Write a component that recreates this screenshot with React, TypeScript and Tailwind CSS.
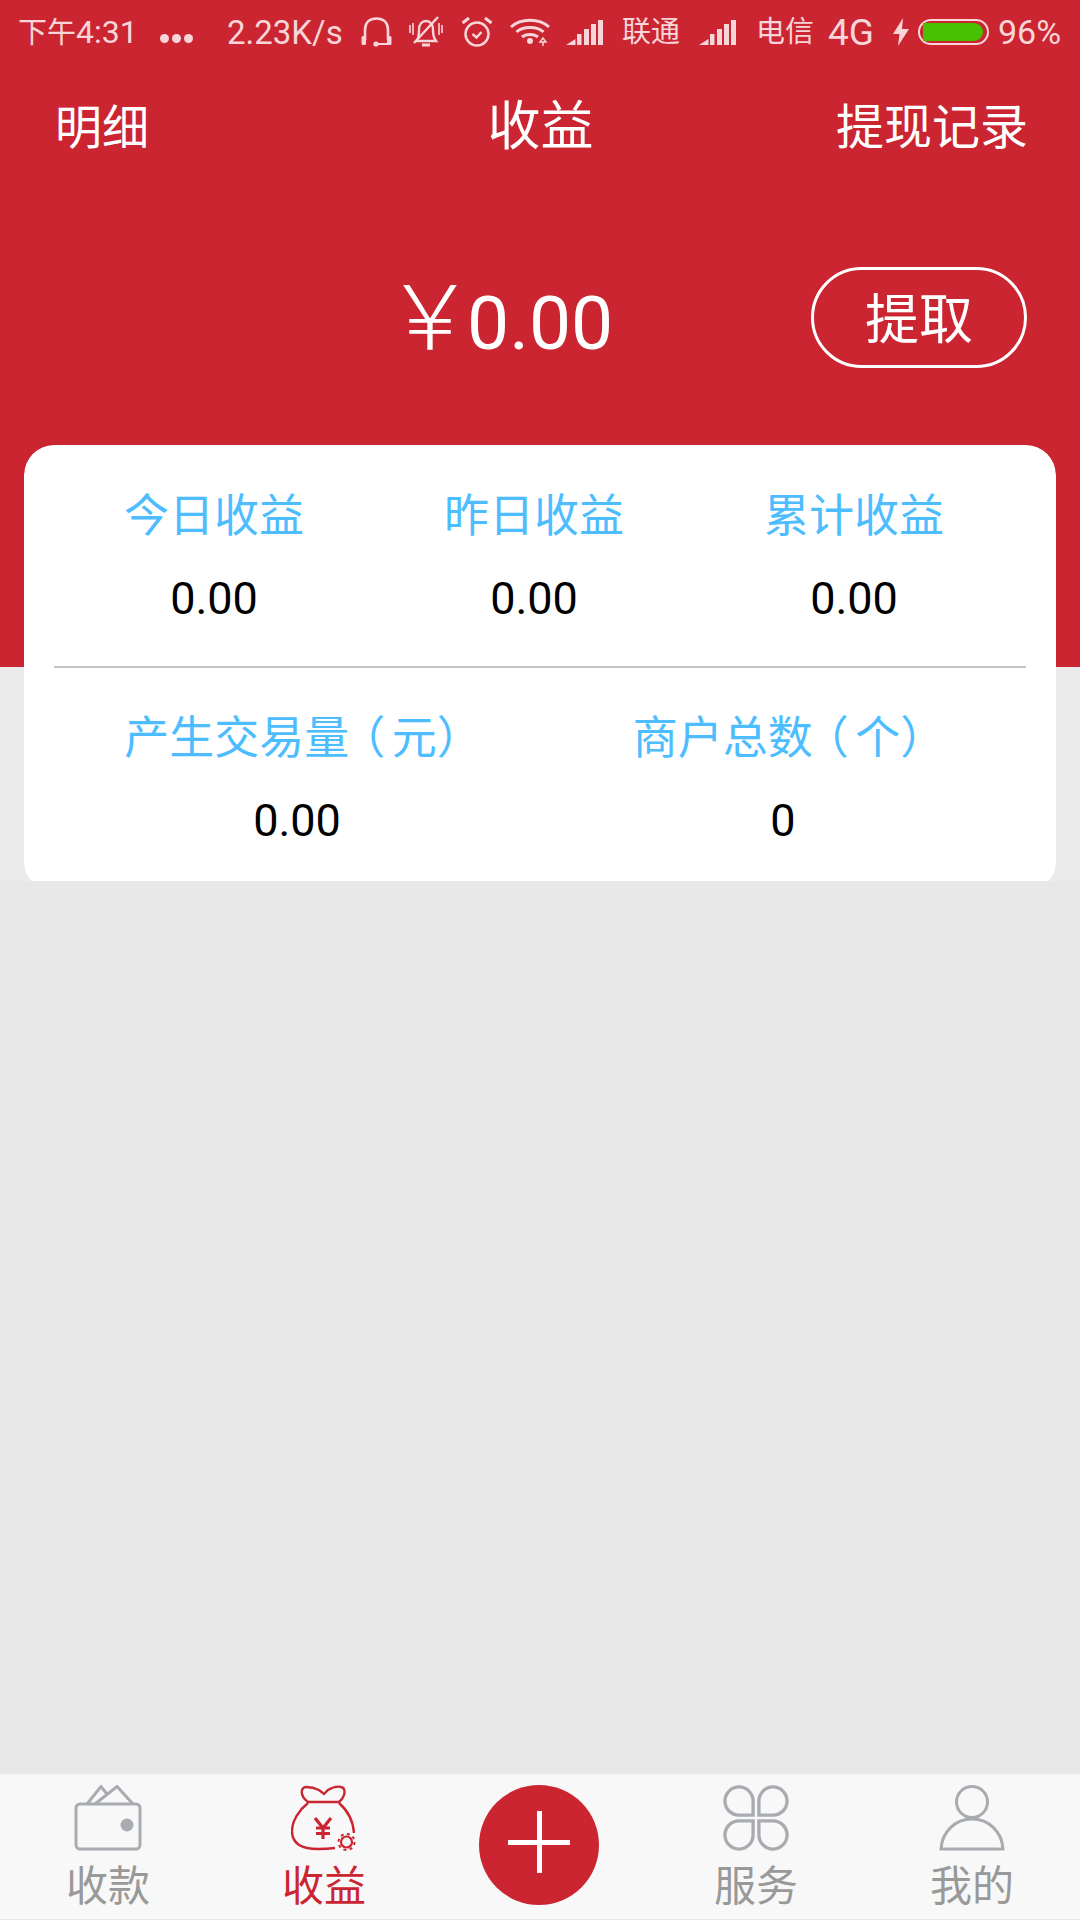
import React from 'react';

const FONT = "font-['Roboto','Noto_Sans_CJK_SC',sans-serif]";

const SignalIcon = () => (
  <svg width="37" height="25" viewBox="0 0 37 25" fill="currentColor">
    <path d="M0 25 L9.5 19 V25 Z" />
    <rect x="11" y="14" width="4.5" height="11" />
    <rect x="18" y="9" width="5" height="16" />
    <rect x="25" y="4" width="5" height="21" />
    <rect x="32" y="0" width="5" height="25" />
  </svg>
);

const HeadsetIcon = () => (
  <svg width="31" height="30" viewBox="0 0 31 30" fill="none" stroke="currentColor" strokeWidth="2.6">
    <path d="M4 23 V13 C4 5 9 1.5 15.5 1.5 C22 1.5 27 5 27 13 V23" />
    <rect x="0.5" y="19" width="4.5" height="9" rx="1.5" fill="currentColor" stroke="none" />
    <rect x="26" y="19" width="4.5" height="9" rx="1.5" fill="currentColor" stroke="none" />
    <circle cx="15" cy="27" r="2.6" fill="currentColor" stroke="none" />
    <path d="M16 27 H27" strokeWidth="2" />
  </svg>
);

const BellOffIcon = () => (
  <svg width="34" height="32" viewBox="0 0 34 32" fill="none" stroke="currentColor" strokeWidth="2.4">
    <path d="M8 25 C10 21 10 18 10 14 C10 8 13 5 17 5 C21 5 24 8 24 14 C24 18 24 21 27 25 Z" />
    <path d="M29 1 L5 27" />
    <path d="M1 9 V17 M33 9 V17 M4 7 V19 M30 7 V19" strokeWidth="1.6" />
    <path d="M13 29 H21" strokeWidth="3" />
  </svg>
);

const AlarmIcon = () => (
  <svg width="32" height="32" viewBox="0 0 32 32" fill="none" stroke="currentColor" strokeWidth="2.5">
    <circle cx="16" cy="18" r="11.5" />
    <path d="M11.5 18 L15.5 21.5 L20.5 16" />
    <path d="M1.5 7 L8 2 M30.5 7 L24 2" strokeWidth="3" />
  </svg>
);

const WifiIcon = () => (
  <svg width="40" height="28" viewBox="0 0 40 28" fill="none" stroke="currentColor" strokeWidth="3">
    <path d="M1 9 C11 0 29 0 39 9" />
    <path d="M6.5 14 C13 8 27 8 33.5 14" />
    <path d="M12 19 C16 15.5 24 15.5 28 19" />
    <circle cx="20" cy="23" r="3" fill="currentColor" stroke="none" />
    <path d="M33 20 L30 24 H36 Z M33 28 V24" strokeWidth="1.5" />
  </svg>
);

const BoltIcon = () => (
  <svg width="16" height="28" viewBox="0 0 16 28" fill="currentColor">
    <path d="M10 0 L0 16 H6.5 L5 28 L16 11 H9 Z" />
  </svg>
);

const WalletIcon = () => (
  <svg width="68" height="66" viewBox="0 0 68 66" fill="none" stroke="#a8abb0" strokeWidth="3">
    <path d="M13 19 L27 1.5 L33 9 M21 19 L43 1.5 L59 19" />
    <rect x="2" y="19" width="64" height="45" rx="4" />
    <circle cx="53" cy="40" r="6.5" fill="#a8abb0" stroke="none" />
  </svg>
);

const MoneyBagIcon = () => (
  <svg width="66" height="66" viewBox="0 0 66 66" fill="none" stroke="#ca2531" strokeWidth="2.4">
    <path d="M17 17 C8 10 10 2 15 2 C21 2 24 3 28 5 L33 9 L37 5 C42 2 46 1 50 2 C55 3 55 11 48 17 Z" />
    <path d="M17 18 C8 25 1 36 1 46 C1 58 9 64 27 64 C34 64 40 63.5 44 63" />
    <path d="M48 18 C56 25 62 34 63 48" />
    <path d="M24 33 L32 43 L40 33 M32 43 V54 M25 43 H39 M25 48.5 H39" strokeWidth="3.2" />
    <circle cx="55.5" cy="57" r="5.5" strokeWidth="2.2" />
    <circle cx="55.5" cy="57" r="8" strokeWidth="2" strokeDasharray="3 3.3" />
  </svg>
);

const CloverIcon = () => (
  <svg width="66" height="66" viewBox="0 0 68 68" fill="none" stroke="#a8abb0" strokeWidth="3.4">
    <path d="M31 31 H16.5 A14.5 14.5 0 1 1 31 16.5 Z" />
    <path d="M37 31 V16.5 A14.5 14.5 0 1 1 51.5 31 Z" />
    <path d="M31 37 V51.5 A14.5 14.5 0 1 1 16.5 37 Z" />
    <path d="M37 37 H51.5 A14.5 14.5 0 1 1 37 51.5 Z" />
  </svg>
);

const UserIcon = () => (
  <svg width="66" height="66" viewBox="0 0 66 66" fill="none" stroke="#a8abb0" strokeWidth="3">
    <circle cx="33" cy="17" r="15.5" />
    <path d="M2 64 C3 47 16 34 33 34 C50 34 63 47 64 64 Z" />
  </svg>
);

function Stat({ label, value }: { label: React.ReactNode; value: string }) {
  return (
    <div className="flex flex-col items-center">
      <span className="h-[62px] text-[45px] leading-[62px] text-[#4dbdff]">{label}</span>
      <span className="mt-[25px] h-[52px] text-[45px] leading-[52px] text-black">{value}</span>
    </div>
  );
}

function NavItem({ icon, label, active }: { icon: React.ReactNode; label: string; active?: boolean }) {
  return (
    <div className="flex flex-col items-center">
      <div className="flex h-[66px] items-center justify-center">{icon}</div>
      <span className={`mt-[11px] text-[42px] leading-[50px] ${active ? 'text-[#ca2531]' : 'text-[#999999]'}`}>{label}</span>
    </div>
  );
}

export default function App() {
  return (
    <div className={`flex h-[1920px] w-[1080px] flex-col overflow-hidden bg-[#e8e8e8] ${FONT}`}>
      {/* Red header */}
      <header className="h-[667px] shrink-0 bg-[#ca2531] text-white">
        <div className="flex h-[64px] items-center whitespace-nowrap pl-[18px] text-[33px] leading-none text-[#f7d5d9]">
          <span className="w-[121px] shrink-0 text-[32px]"><span className="text-[29px]">下午</span>4:31</span>
          <span className="ml-[21px] mt-[12px] flex w-[33px] shrink-0 gap-[3px]">
            <i className="h-[9px] w-[9px] rounded-full bg-[#f7d5d9]" />
            <i className="h-[9px] w-[9px] rounded-full bg-[#f7d5d9]" />
            <i className="h-[9px] w-[9px] rounded-full bg-[#f7d5d9]" />
          </span>
          <span className="ml-[34px] w-[115px] shrink-0">2.23K/s</span>
          <span className="ml-[19px] shrink-0"><HeadsetIcon /></span>
          <span className="ml-[17px] shrink-0"><BellOffIcon /></span>
          <span className="ml-[18px] shrink-0"><AlarmIcon /></span>
          <span className="ml-[17px] shrink-0"><WifiIcon /></span>
          <span className="ml-[16px] shrink-0"><SignalIcon /></span>
          <span className="ml-[19px] w-[58px] shrink-0 text-[29px]">联通</span>
          <span className="ml-[19px] shrink-0"><SignalIcon /></span>
          <span className="ml-[20px] w-[58px] shrink-0 text-[29px]">电信</span>
          <span className="ml-[14px] w-[46px] shrink-0 text-[37px]">4G</span>
          <span className="ml-[19px] shrink-0"><BoltIcon /></span>
          <span className="ml-[9px] flex h-[26px] w-[71px] shrink-0 items-center rounded-full border-2 border-[#f7d5d9] pl-[3px] pr-[4px]">
            <span className="h-[18px] w-full rounded-r-full rounded-l-[3px] bg-[#46c000]" />
          </span>
          <span className="ml-[9px] shrink-0 text-[34px]">96%</span>
        </div>

        <div className="flex h-[128px] items-center justify-between pl-[55px] pr-[52px] text-[47px]">
          <span className="w-[200px]">明细</span>
          <span className="mr-[2px] text-[53px]">收益</span>
          <span className="w-[200px] text-right text-[48px]">提现记录</span>
        </div>

        <div className="mt-[75px] flex h-[101px] items-center pl-[385px] pr-[53px]">
          <span className="flex items-baseline pt-[3px] text-[75px] leading-none">
            <span className="text-[90px] font-light tracking-[-8px]">￥</span>0.00
          </span>
          <button className="ml-auto flex h-[101px] w-[216px] items-center justify-center rounded-full border-[3px] border-white pt-[6px] text-[54px] leading-none">
            提取
          </button>
        </div>
      </header>

      {/* Stats card, clipped at its lower edge */}
      <div className="bg-[#ebebeb]">
        <div className="mx-[24px] -mt-[222px] h-[436px] overflow-hidden rounded-t-[30px]">
          <div className="h-[446px] rounded-[30px] bg-white px-[30px]">
            <div className="grid h-[221px] grid-cols-3 content-start pr-[12px] pt-[41px]">
              <Stat label="今日收益" value="0.00" />
              <Stat label="昨日收益" value="0.00" />
              <Stat label="累计收益" value="0.00" />
            </div>
            <div className="h-[2px] bg-[#c4c4c4]" />
            <div className="grid grid-cols-2 pt-[40px]">
              <Stat
                label={<span className="pl-[12px]">产生交易量<span className="ml-[12px] mr-[8px] [font-feature-settings:'palt']">（</span>元）</span>}
                value="0.00"
              />
              <Stat
                label={<span className="pl-[12px]">商户总数<span className="ml-[12px] mr-[8px] [font-feature-settings:'palt']">（</span>个）</span>}
                value="0"
              />
            </div>
          </div>
        </div>
      </div>

      <div className="flex-1" />

      {/* Bottom nav */}
      <nav className="grid h-[146px] shrink-0 grid-cols-5 border-b border-[#e8e8e8] bg-[#f8f8f8] pt-[11px]">
        <NavItem icon={<WalletIcon />} label="收款" />
        <NavItem icon={<MoneyBagIcon />} label="收益" active />
        <div className="flex justify-center pr-[2px]">
          <div className="relative h-[120px] w-[120px] rounded-full bg-[#ca2531]">
            <i className="absolute left-[29px] top-[55px] h-[5px] w-[62px] bg-white" />
            <i className="absolute left-[58px] top-[26px] h-[62px] w-[5px] bg-white" />
          </div>
        </div>
        <NavItem icon={<CloverIcon />} label="服务" />
        <NavItem icon={<UserIcon />} label="我的" />
      </nav>
    </div>
  );
}
